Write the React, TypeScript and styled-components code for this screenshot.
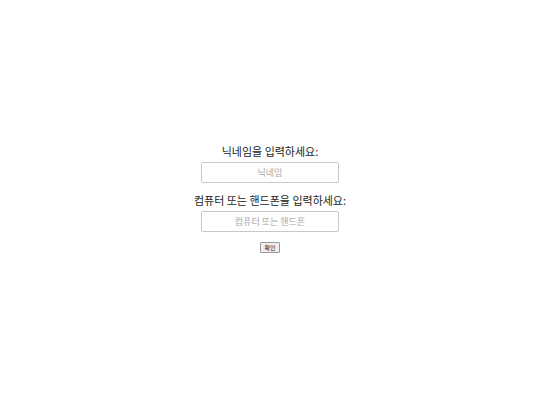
import React from "react";
import styled, { createGlobalStyle } from "styled-components";

const GlobalStyle = createGlobalStyle`
	html, body {
		margin: 0;
		padding: 0;
		background: #fff;
	}
	body {
		font-family: "Noto Sans CJK KR", "Noto Sans", sans-serif;
	}
`;

const Page = styled.div`
	width: 100%;
	height: 100vh;
	display: flex;
	align-items: center;
	justify-content: center;
`;

const Form = styled.form`
	display: flex;
	flex-direction: column;
	align-items: center;
	margin-top: -8px;
`;

const Label = styled.label`
	font-size: 11px;
	line-height: 14px;
	color: #222;
	margin-bottom: 4px;
`;

const Input = styled.input`
	box-sizing: border-box;
	width: 138px;
	height: 21px;
	border: 1px solid #c8c8c8;
	border-radius: 2px;
	font-family: "Noto Sans CJK KR", sans-serif;
	font-size: 9px;
	text-align: center;
	color: #333;
	margin-bottom: 10px;
	outline: none;
	&::placeholder {
		color: #aaa;
	}
`;

const Button = styled.button`
	box-sizing: border-box;
	height: 11px;
	padding: 0 3px;
	font-family: "Noto Sans CJK KR", sans-serif;
	font-size: 6px;
	line-height: 9px;
	color: #111;
	background: #efefef;
	border: 1px solid #999;
	border-radius: 1px;
`;

export default function App() {
	return (
		<>
			<GlobalStyle />
			<Page>
				<Form onSubmit={(e) => e.preventDefault()}>
					<Label htmlFor="nick">닉네임을 입력하세요:</Label>
					<Input id="nick" placeholder="닉네임" />
					<Label htmlFor="device">컴퓨터 또는 핸드폰을 입력하세요:</Label>
					<Input id="device" placeholder="컴퓨터 또는 핸드폰" />
					<Button type="submit">확인</Button>
				</Form>
			</Page>
		</>
	);
}
